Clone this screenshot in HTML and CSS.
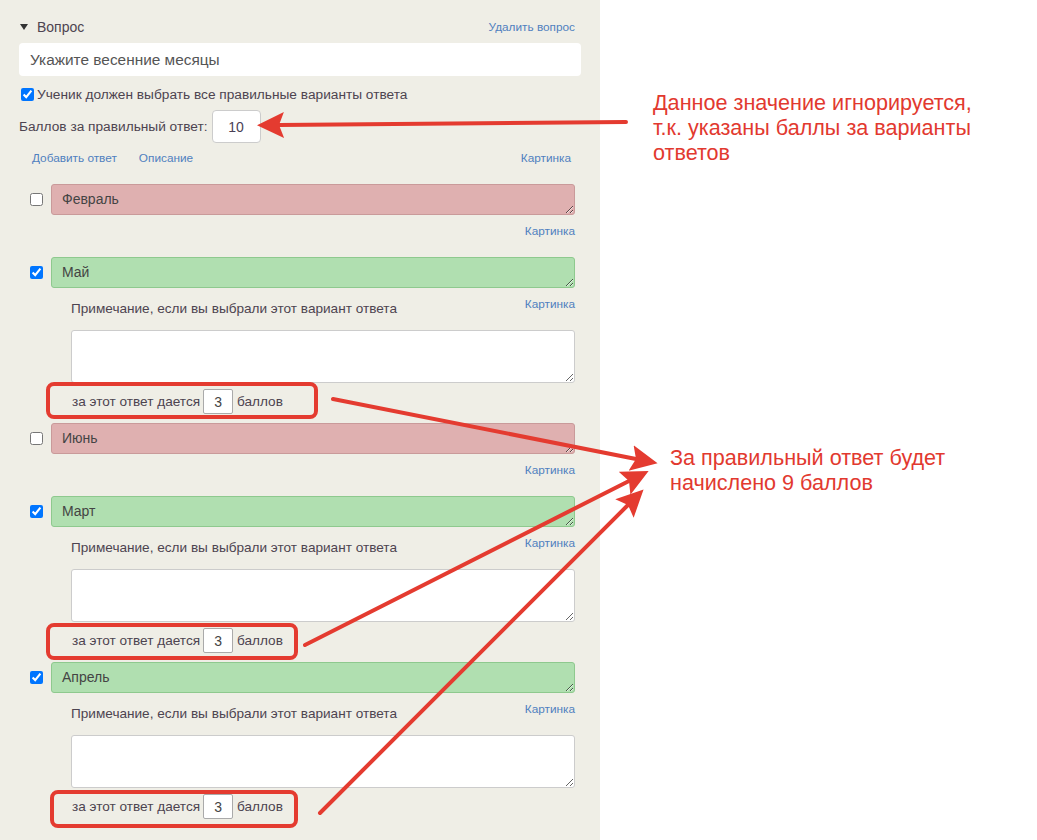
FILE: index.html
```html
<!DOCTYPE html>
<html lang="ru">

<head>
  <meta charset="UTF-8">
  <title>Вопрос</title>
  <link rel="stylesheet" href="styles.css">
</head>

<body>
  <div class="page">
    <!-- редактор вопроса -->
    <section class="editor">
      <div class="q-head">
        <span class="caret"></span>
        <span class="q-title">Вопрос</span>
        <a class="link q-delete">Удалить вопрос</a>
      </div>
      <input class="q-text" type="text" value="Укажите весенние месяцы">
      <label class="q-all"><input type="checkbox" checked>Ученик должен выбрать все правильные варианты ответа</label>
      <div class="q-score">Баллов за правильный ответ:<input class="score-box" type="text" value="10"></div>
      <div class="q-links">
        <a class="link">Добавить ответ</a>
        <a class="link">Описание</a>
        <a class="link push">Картинка</a>
      </div>

      <div class="answers">
        <div class="answer">
          <div class="answer-row">
            <input type="checkbox">
            <textarea class="answer-text wrong">Февраль</textarea>
          </div>
          <div class="answer-meta"><a class="link">Картинка</a></div>
        </div>

        <div class="answer has-note">
          <div class="answer-row">
            <input type="checkbox" checked>
            <textarea class="answer-text right">Май</textarea>
          </div>
          <div class="answer-meta">
            <span class="note-label">Примечание, если вы выбрали этот вариант ответа</span>
            <a class="link">Картинка</a>
          </div>
          <textarea class="note-text"></textarea>
          <div class="points">за этот ответ дается<input class="points-box" type="text" value="3">баллов</div>
        </div>

        <div class="answer">
          <div class="answer-row">
            <input type="checkbox">
            <textarea class="answer-text wrong">Июнь</textarea>
          </div>
          <div class="answer-meta"><a class="link">Картинка</a></div>
        </div>

        <div class="answer has-note">
          <div class="answer-row">
            <input type="checkbox" checked>
            <textarea class="answer-text right">Март</textarea>
          </div>
          <div class="answer-meta">
            <span class="note-label">Примечание, если вы выбрали этот вариант ответа</span>
            <a class="link">Картинка</a>
          </div>
          <textarea class="note-text"></textarea>
          <div class="points">за этот ответ дается<input class="points-box" type="text" value="3">баллов</div>
        </div>

        <div class="answer has-note">
          <div class="answer-row">
            <input type="checkbox" checked>
            <textarea class="answer-text right">Апрель</textarea>
          </div>
          <div class="answer-meta">
            <span class="note-label">Примечание, если вы выбрали этот вариант ответа</span>
            <a class="link">Картинка</a>
          </div>
          <textarea class="note-text"></textarea>
          <div class="points">за этот ответ дается<input class="points-box" type="text" value="3">баллов</div>
        </div>
      </div>
    </section>

    <!-- пояснения -->
    <aside class="notes">
      <p class="note note-top">Данное значение игнорируется,<br>т.к. указаны баллы за варианты<br>ответов</p>
      <p class="note note-sum">За правильный ответ будет<br>начислено 9 баллов</p>
    </aside>

    <!-- стрелки и рамки поверх -->
    <svg class="marks" width="1037" height="840" viewBox="0 0 1037 840">
      <defs>
        <marker id="head" markerUnits="userSpaceOnUse" markerWidth="28" markerHeight="28" viewBox="0 -14 28 28" refX="5" refY="0" orient="auto">
          <path d="M0,-13 L27,0 L0,13 L5,0 Z" fill="#e43b30" />
        </marker>
      </defs>
      <g fill="none" stroke="#e43b30" stroke-width="4" stroke-linecap="round">
        <rect x="48" y="384" width="268" height="33" rx="6" />
        <rect x="48" y="625" width="248" height="33" rx="6" />
        <rect x="52" y="792" width="244" height="34" rx="6" />
        <line x1="626" y1="122" x2="279" y2="125" marker-end="url(#head)" />
        <line x1="333" y1="399" x2="636" y2="459" marker-end="url(#head)" />
        <line x1="305" y1="645" x2="629" y2="481" marker-end="url(#head)" />
        <line x1="320" y1="813" x2="628" y2="505" marker-end="url(#head)" />
      </g>
    </svg>
  </div>
</body>

</html>
```

FILE: styles.css
```css
* {
  margin: 0;
  padding: 0;
  box-sizing: border-box;
}

body {
  font-family: "Liberation Sans", Arial, sans-serif;
  color: #444;
  background: #fff;
}

.page {
  position: relative;
  display: flex;
  width: 1037px;
  min-height: 840px;
}

/* левая панель */
.editor {
  flex: none;
  width: 600px;
  min-height: 840px;
  background: #efeee6;
  padding: 17px 19px 0;
}

.link {
  color: #4f80bf;
  font-size: 11.8px;
  text-decoration: none;
  cursor: pointer;
}

.q-head {
  display: flex;
  align-items: center;
  height: 20px;
}

.caret {
  width: 0;
  height: 0;
  border-left: 4px solid transparent;
  border-right: 4px solid transparent;
  border-top: 6px solid #333;
  margin: 0 9px 0 1px;
}

.q-title {
  font-size: 14px;
  color: #4d4450;
}

.q-delete {
  margin-left: auto;
  margin-right: 6px;
}

.q-text {
  display: block;
  width: 100%;
  height: 33px;
  margin-top: 6px;
  border: none;
  border-radius: 4px;
  background: #fff;
  padding: 0 11px;
  font-family: inherit;
  font-size: 15.4px;
  color: #555;
  outline: none;
}

.q-all {
  display: flex;
  align-items: center;
  height: 20px;
  margin-top: 8px;
  font-size: 13.7px;
  color: #4d4450;
}

.q-all input {
  width: 13px;
  height: 13px;
  margin: 0 3px 0 2px;
}

.q-score {
  display: flex;
  align-items: center;
  margin-top: 6px;
  font-size: 13.7px;
  color: #4d4450;
}

.score-box {
  width: 49px;
  height: 33px;
  margin-left: 4px;
  border: 1px solid #ccc;
  border-radius: 4px;
  background: #fff;
  text-align: center;
  font-family: inherit;
  font-size: 14px;
  color: #4a3f55;
}

.q-links {
  display: flex;
  gap: 22px;
  margin-top: 7px;
  line-height: 16px;
  padding: 0 10px 0 13px;
}

.push {
  margin-left: auto;
}

/* варианты ответа */
.answers {
  padding: 18px 6px 0 11px;
}

.answer {
  margin-bottom: 18px;
}

.answer.has-note {
  margin-bottom: 9px;
}

.answer-row {
  display: flex;
  align-items: center;
}

.answer-row input {
  flex: none;
  width: 13px;
  height: 13px;
  margin: 0 8px 0 0;
}

.answer-text {
  flex: 1;
  height: 31px;
  border: 1px solid;
  border-radius: 3px;
  padding: 6px 10px;
  font-family: inherit;
  font-size: 14px;
  line-height: 17px;
  color: #444;
  resize: vertical;
  overflow: hidden;
}

.answer-text.wrong {
  background: #dfb0b0;
  border-color: #c99a9a;
}

.answer-text.right {
  background: #b0dfb0;
  border-color: #8ec98e;
}

.answer-meta {
  display: flex;
  justify-content: flex-end;
  align-items: flex-start;
  margin-top: 8px;
  line-height: 16px;
}

.note-label {
  margin: 0 auto 0 41px;
  padding-top: 5px;
  font-size: 13.6px;
  color: #4d4450;
}

.note-text {
  display: block;
  width: calc(100% - 41px);
  height: 53px;
  margin: 13px 0 0 41px;
  border: 1px solid #ccc;
  border-radius: 3px;
  background: #fff;
  resize: vertical;
}

.points {
  display: flex;
  align-items: center;
  height: 25px;
  margin: 6px 0 0 42px;
  font-size: 13.6px;
  color: #4d4450;
}

.points-box {
  width: 30px;
  height: 25px;
  margin: 0 4px 0 3px;
  border: 1px solid #aaa;
  border-radius: 2px;
  background: #fff;
  text-align: center;
  font-family: inherit;
  font-size: 14px;
  color: #444;
}

/* пояснения справа */
.notes {
  flex: 1;
  padding-left: 53px;
  color: #e2392f;
  font-size: 21.6px;
  line-height: 25px;
}

.note-top {
  margin-top: 90px;
}

.note-sum {
  margin: 280px 0 0 17px;
}

.marks {
  position: absolute;
  left: 0;
  top: 0;
  pointer-events: none;
}
```
